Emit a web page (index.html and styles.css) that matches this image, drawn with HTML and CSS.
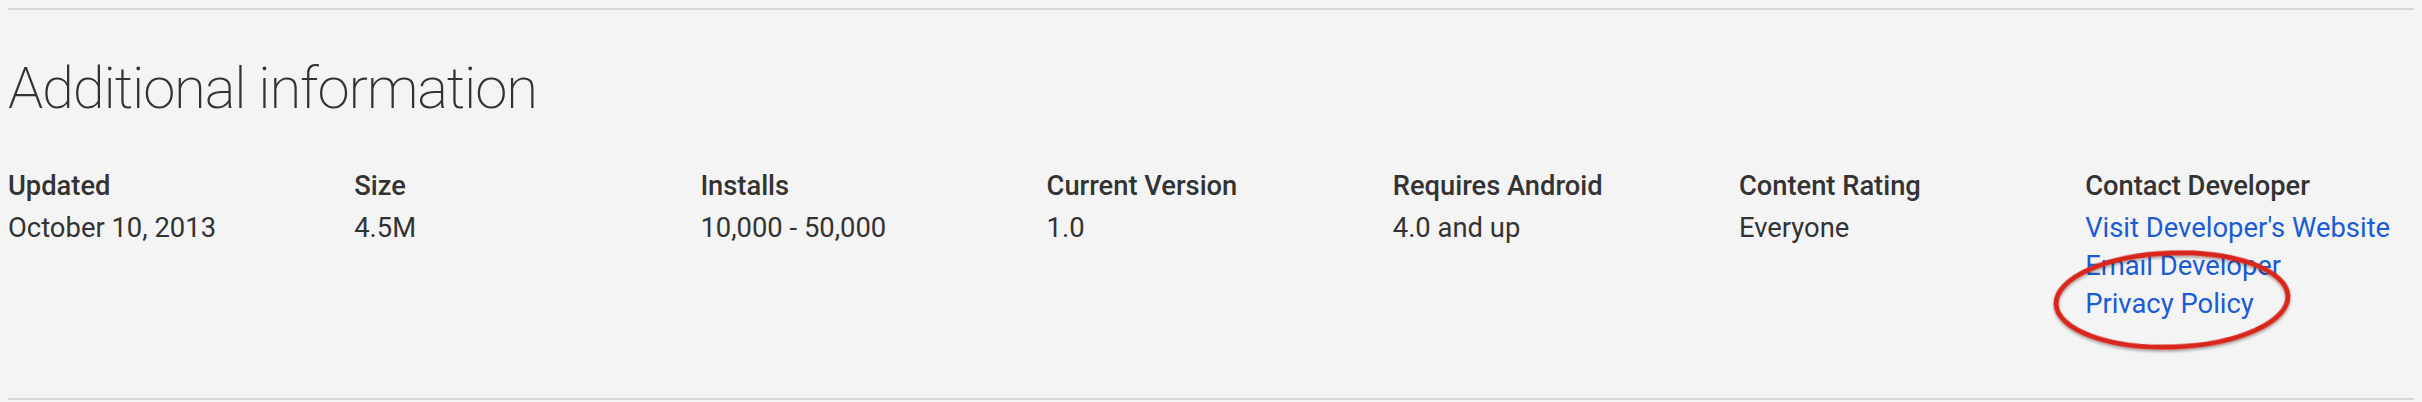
FILE: index.html
```html
<!DOCTYPE html>
<html>
<head>
<meta charset="utf-8">
<link rel="stylesheet" href="styles.css">
</head>
<body>
<section class="details">
  <h1 class="title">Additional information</h1>
  <div class="meta">
    <div class="meta-item">
      <div class="label">Updated</div>
      <div class="value">October 10, 2013</div>
    </div>
    <div class="meta-item">
      <div class="label">Size</div>
      <div class="value">4.5M</div>
    </div>
    <div class="meta-item">
      <div class="label">Installs</div>
      <div class="value">10,000 - 50,000</div>
    </div>
    <div class="meta-item">
      <div class="label">Current Version</div>
      <div class="value">1.0</div>
    </div>
    <div class="meta-item">
      <div class="label">Requires Android</div>
      <div class="value">4.0 and up</div>
    </div>
    <div class="meta-item">
      <div class="label">Content Rating</div>
      <div class="value">Everyone</div>
    </div>
    <div class="meta-item contact">
      <div class="label">Contact Developer</div>
      <a class="value link" href="#">Visit Developer's Website</a>
      <a class="value link" href="#">Email Developer</a>
      <a class="value link" href="#">Privacy Policy</a>
      <svg class="annotation" width="250" height="112" viewBox="0 0 250 112">
        <defs>
          <filter id="shadow" x="-10%" y="-20%" width="120%" height="140%">
            <feDropShadow dx="0" dy="2" stdDeviation="1.5" flood-color="#000" flood-opacity="0.35"/>
          </filter>
        </defs>
        <ellipse cx="125" cy="55" rx="116" ry="47" fill="none" stroke="#d9261c" stroke-width="5" transform="rotate(-2 125 55)" filter="url(#shadow)"/>
      </svg>
    </div>
  </div>
</section>
</body>
</html>
```

FILE: styles.css
```css
html, body {
  background: #f4f4f4;
}
body {
  margin: 8px;
  font-family: Roboto, "Liberation Sans", sans-serif;
  color: #333333;
}
.details {
  border-top: 2px solid #d6d6d6;
  border-bottom: 2px solid #d6d6d6;
  height: 388px;
  box-sizing: content-box;
}
.title {
  margin: 44px 0 0 0;
  font-size: 58px;
  line-height: 68px;
  font-weight: 200;
  letter-spacing: -1.2px;
  color: #333333;
}
.meta {
  display: grid;
  grid-template-columns: repeat(7, 346.2px);
  margin-top: 45px;
}
.meta-item {
  display: flex;
  flex-direction: column;
}
.contact {
  position: relative;
}
.label {
  font-size: 27.3px;
  line-height: 38px;
  font-weight: 500;
  color: #333333;
  margin-bottom: 4px;
}
.value {
  font-size: 27.4px;
  line-height: 38px;
  font-weight: 400;
  color: #333333;
}
.link {
  color: #1a5bd6;
  text-decoration: none;
}
.annotation {
  position: absolute;
  left: -38px;
  top: 78px;
}
```
